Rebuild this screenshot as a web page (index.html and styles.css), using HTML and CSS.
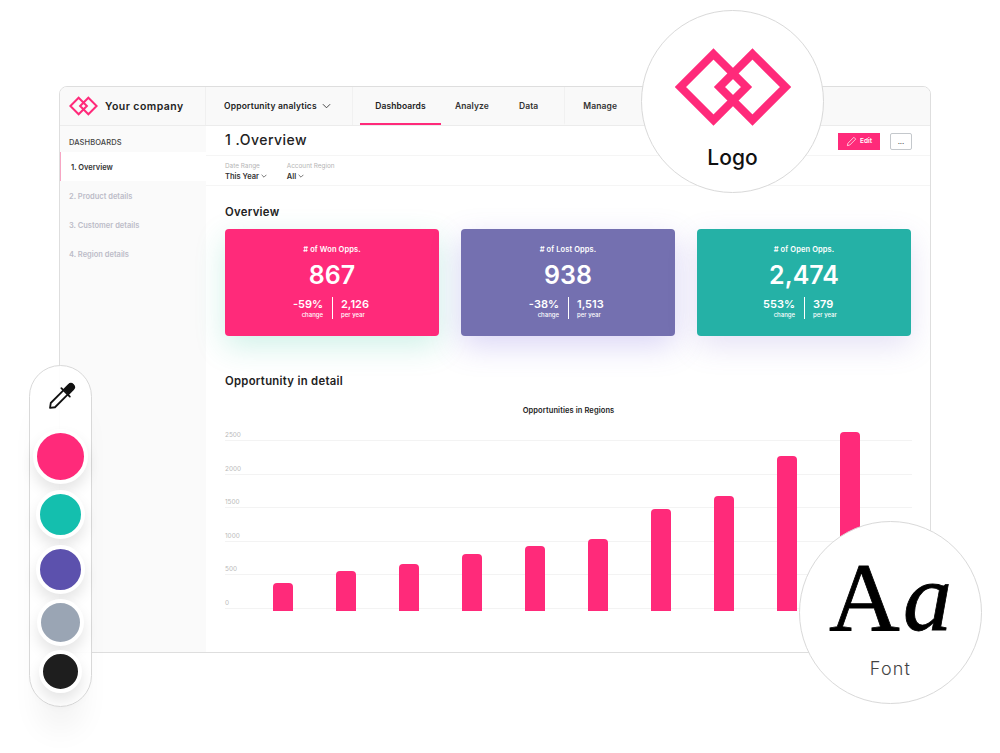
FILE: index.html
```html
<!DOCTYPE html>
<html lang="en">
<head>
  <meta charset="UTF-8">
  <meta name="viewport" content="width=device-width, initial-scale=1.0">
  <title>Your company</title>
  <link rel="stylesheet" href="styles.css">
</head>
<body>
  <svg class="defs" width="0" height="0">
    <symbol id="logoMark" viewBox="0 0 116 78">
      <path d="M38.5 6 L71.5 39 L38.5 72 L5.5 39 Z M77.5 6 L110.5 39 L77.5 72 L44.5 39 Z" fill="none" stroke="#ff2a7a" stroke-width="8"/>
    </symbol>
  </svg>

  <div class="stage">
    <div class="app">
      <header class="top-bar">
        <div class="brand">
          <svg class="brand-logo"><use href="#logoMark"/></svg>
          <span>Your company</span>
        </div>
        <div class="picker">
          <span>Opportunity analytics</span>
          <svg class="chevron-lg" viewBox="0 0 10 6"><path d="M1 1l4 4 4-4" fill="none" stroke="#333" stroke-width="1"/></svg>
        </div>
        <nav class="tabs">
          <a class="tab active">Dashboards</a>
          <a class="tab">Analyze</a>
          <a class="tab tab-data">Data</a>
          <a class="tab tab-manage">Manage</a>
        </nav>
      </header>

      <div class="app-body">
        <aside class="sidebar">
          <div class="side-title">DASHBOARDS</div>
          <div class="side-item current">1. Overview</div>
          <div class="side-item">2. Product details</div>
          <div class="side-item">3. Customer details</div>
          <div class="side-item">4. Region details</div>
        </aside>

        <main class="content">
          <div class="title-row">
            <h1>1 .Overview</h1>
            <div class="actions">
              <button class="edit-btn">
                <svg viewBox="0 0 12 12"><path d="M1.5 10.5l.6-2.6L8.6 1.4l2 2-6.5 6.5z" fill="none" stroke="#fff" stroke-width=".8"/></svg>
                Edit
              </button>
              <button class="more-btn">...</button>
            </div>
          </div>

          <div class="filters">
            <div class="filter">
              <label>Date Range</label>
              <span>This Year <svg viewBox="0 0 10 6"><path d="M1 1l4 4 4-4" fill="none" stroke="#333" stroke-width="1.1"/></svg></span>
            </div>
            <div class="filter">
              <label>Account Region</label>
              <span>All <svg viewBox="0 0 10 6"><path d="M1 1l4 4 4-4" fill="none" stroke="#333" stroke-width="1.1"/></svg></span>
            </div>
          </div>

          <div class="page">
            <h2 class="section-title">Overview</h2>
            <div class="cards">
              <div class="card pink">
                <div class="card-label"># of Won Opps.</div>
                <div class="card-value">867</div>
                <div class="card-stats">
                  <div class="stat left"><b>-59%</b><small>change</small></div>
                  <div class="stat"><b>2,126</b><small>per year</small></div>
                </div>
              </div>
              <div class="card purple">
                <div class="card-label"># of Lost Opps.</div>
                <div class="card-value">938</div>
                <div class="card-stats">
                  <div class="stat left"><b>-38%</b><small>change</small></div>
                  <div class="stat"><b>1,513</b><small>per year</small></div>
                </div>
              </div>
              <div class="card teal">
                <div class="card-label"># of Open Opps.</div>
                <div class="card-value">2,474</div>
                <div class="card-stats">
                  <div class="stat left"><b>553%</b><small>change</small></div>
                  <div class="stat"><b>379</b><small>per year</small></div>
                </div>
              </div>
            </div>

            <h2 class="section-title detail-title">Opportunity in detail</h2>
            <div class="chart-title">Opportunities in Regions</div>
            <div class="plot">
              <div class="grid-row first">2500</div>
              <div class="grid-row">2000</div>
              <div class="grid-row">1500</div>
              <div class="grid-row">1000</div>
              <div class="grid-row">500</div>
              <div class="grid-row">0</div>
              <div class="bars">
                <div class="bar" style="height: 28px"></div>
                <div class="bar" style="height: 40px"></div>
                <div class="bar" style="height: 47px"></div>
                <div class="bar" style="height: 57px"></div>
                <div class="bar" style="height: 65px"></div>
                <div class="bar" style="height: 72px"></div>
                <div class="bar" style="height: 102px"></div>
                <div class="bar" style="height: 115px"></div>
                <div class="bar" style="height: 155px"></div>
                <div class="bar" style="height: 179px"></div>
              </div>
            </div>
          </div>
        </main>
      </div>
    </div>

    <div class="bubble logo-bubble">
      <svg class="bubble-logo"><use href="#logoMark"/></svg>
      <div class="bubble-name">Logo</div>
    </div>

    <div class="bubble font-bubble">
      <div class="font-sample">A<i>a</i></div>
      <div class="font-name">Font</div>
    </div>

    <div class="palette">
      <svg class="dropper" viewBox="0 0 28 28">
        <g transform="rotate(45 14 14)" fill="none" stroke="#111" stroke-width="1.800" stroke-linejoin="round" stroke-linecap="round">
          <path d="M10.800 7V0a3.200 3.200 0 0 1 6.400 0v7" fill="#111"/>
          <path d="M8 7.500h12"/>
          <path d="M11 8v17.500l3 4 3-4V8"/>
        </g>
      </svg>
      <span class="swatch s-pink"></span>
      <span class="swatch s-teal"></span>
      <span class="swatch s-purple"></span>
      <span class="swatch s-grey"></span>
      <span class="swatch s-black"></span>
    </div>
  </div>
</body>
</html>
```
FILE: styles.css
```css
:root {
  --pink: #ff2a7a;
  --line: #f3f3f3;
  --text: #222;
}

* {
  box-sizing: border-box;
}

body {
  margin: 0;
  background: #fff;
  color: var(--text);
  font-family: "Inter", "Liberation Sans", sans-serif;
  overflow: hidden;
}

.defs {
  position: absolute;
}

.stage {
  position: relative;
  width: 1000px;
  height: 753px;
  padding: 86px 0 0 59px;
}

.app {
  width: 872px;
  height: 567px;
  border: 1px solid #dedede;
  border-radius: 8px;
  overflow: hidden;
  display: flex;
  flex-direction: column;
}

/* Top bar */
.top-bar {
  height: 39px;
  flex: none;
  display: flex;
  align-items: stretch;
  background: #f9f9f9;
  border-bottom: 1px solid #ececec;
  font-size: 8.500px;
  font-weight: 600;
  letter-spacing: .1px;
}

.brand {
  width: 146px;
  display: flex;
  align-items: center;
  gap: 7px;
  padding-left: 9px;
  font-size: 10.500px;
  letter-spacing: .45px;
  border-right: 1px solid #f0f0f0;
  color: #222;
}

.brand-logo {
  width: 29px;
  height: 20px;
}

.picker {
  width: 147px;
  display: flex;
  align-items: center;
  gap: 5px;
  padding-left: 18px;
  letter-spacing: .18px;
  border-right: 1px solid #f1f1f1;
}

.chevron-lg {
  width: 9px;
  height: 6px;
}

.tabs {
  display: flex;
  flex: 1;
  padding-left: 7px;
}

.tab {
  display: flex;
  align-items: center;
  justify-content: center;
  padding: 1px 14px 0;
  color: #333;
  border-bottom: 2px solid transparent;
}

.tab.active {
  width: 81px;
  padding: 1px 0 0;
  color: #222;
  border-bottom-color: var(--pink);
}

.tab-data {
  padding-left: 16px;
  padding-right: 26px;
  border-right: 1px solid #f1f1f1;
  margin-right: 4px;
}

/* Sidebar */
.app-body {
  flex: 1;
  display: flex;
  min-height: 0;
}

.sidebar {
  width: 146px;
  flex: none;
  background: #fafafa;
  padding-top: 11px;
  font-size: 7.500px;
  font-weight: 600;
}

.side-title {
  height: 15px;
  padding-left: 9px;
  line-height: 12px;
  color: #444;
  font-weight: 500;
  letter-spacing: .1px;
}

.side-item {
  height: 29px;
  padding: 1px 0 0 9px;
  display: flex;
  align-items: center;
  color: #bcbcc8;
}

.side-item.current {
  background: #fff;
  border-left: 1px solid #f7a6c4;
  padding-left: 10px;
  color: #333;
}

/* Main column */
.content {
  flex: 1;
  min-width: 0;
  background: #fff;
}

.title-row {
  height: 30px;
  display: flex;
  align-items: center;
  justify-content: space-between;
  padding: 0 18px 0 19px;
  border-bottom: 1px solid #f5f5f5;
}

h1 {
  margin: 0 0 3px;
  font-size: 14px;
  font-weight: 500;
  letter-spacing: .5px;
  color: #222;
}

.actions {
  display: flex;
  gap: 10px;
  margin-top: 1px;
}

.edit-btn {
  width: 42px;
  height: 17px;
  padding: 0;
  border: 0;
  display: flex;
  align-items: center;
  justify-content: center;
  gap: 3px;
  background: var(--pink);
  color: #fff;
  font: 600 6.500px "Inter", sans-serif;
}

.edit-btn svg {
  width: 11px;
  height: 11px;
}

.more-btn {
  width: 22px;
  height: 17px;
  padding: 0;
  border: 1px solid #c4c8cc;
  border-radius: 2px;
  background: #fff;
  color: #555;
  font: 600 7px "Inter", sans-serif;
}

.filters {
  height: 30px;
  display: flex;
  gap: 20px;
  padding: 7px 0 0 19px;
  border-bottom: 1px solid #f5f5f5;
}

.filter {
  display: flex;
  flex-direction: column;
  gap: 2px;
}

.filter label {
  font-size: 6.400px;
  line-height: 7px;
  color: #b5b5b5;
}

.filter span {
  font-size: 7.500px;
  line-height: 9px;
  font-weight: 600;
  color: #333;
}

.filter svg {
  width: 6px;
  height: 4px;
  vertical-align: 1px;
}

.page {
  padding: 20px 18px 0 19px;
}

.section-title {
  margin: 0;
  font-size: 11.300px;
  line-height: 13px;
  font-weight: 600;
  letter-spacing: .3px;
  color: #222;
}

/* Stat cards */
.cards {
  display: flex;
  gap: 22px;
  margin-top: 10px;
}

.card {
  width: 214px;
  height: 107px;
  border-radius: 4px;
  color: #fff;
  text-align: center;
  padding-top: 16px;
}

.card.pink {
  background: #ff2a7a;
  box-shadow: 0 10px 30px rgba(37, 190, 150, .22);
}

.card.purple {
  background: #7470b0;
  box-shadow: 0 10px 30px rgba(110, 90, 220, .25);
}

.card.teal {
  background: #25b1a6;
  box-shadow: 0 10px 30px rgba(110, 90, 200, .18);
}

.card-label {
  font-size: 7.500px;
  line-height: 10px;
  font-weight: 600;
  letter-spacing: .1px;
}

.card-value {
  margin-top: 6px;
  font-size: 25px;
  line-height: 28px;
  font-weight: 600;
}

.card-stats {
  display: flex;
  justify-content: center;
  margin-top: 8px;
  padding-left: 2px;
}

.stat {
  width: 50%;
  display: flex;
  flex-direction: column;
  align-items: flex-start;
  padding-left: 8px;
}

.stat.left {
  align-items: flex-end;
  padding: 0 9px 0 0;
  border-right: 1px solid #fff;
}

.stat b {
  font-size: 11px;
  line-height: 14px;
  font-weight: 600;
}

.stat small {
  font-size: 6px;
  line-height: 8px;
  font-weight: 500;
}

/* Chart */
.detail-title {
  margin-top: 39px;
}

.chart-title {
  margin-top: 18px;
  text-align: center;
  font-size: 7.500px;
  line-height: 10px;
  font-weight: 600;
  letter-spacing: .1px;
  color: #222;
}

.plot {
  position: relative;
  margin-top: 11px;
}

.grid-row {
  height: 33.600px;
  display: flex;
  align-items: flex-end;
  padding-bottom: 1px;
  border-bottom: 1px solid var(--line);
  font-size: 6.400px;
  line-height: 8px;
  color: #b9b9b9;
}

.grid-row.first {
  height: 14px;
}

.bars {
  position: absolute;
  left: 48px;
  bottom: -2px;
  display: flex;
  align-items: flex-end;
  gap: 43px;
}

.bar {
  width: 20px;
  background: var(--pink);
  border-radius: 4px 4px 0 0;
}

/* Floating circles */
.bubble {
  position: absolute;
  width: 183px;
  height: 183px;
  border: 1px solid #d9d9d9;
  border-radius: 50%;
  background: #fff;
  display: flex;
  flex-direction: column;
  align-items: center;
}

.logo-bubble {
  left: 641px;
  top: 10px;
  padding-top: 37px;
}

.bubble-logo {
  width: 116px;
  height: 78px;
}

.bubble-name {
  margin-top: 19px;
  font-size: 21px;
  line-height: 26px;
  font-weight: 500;
  color: #111;
}

.font-bubble {
  left: 799px;
  top: 521px;
  padding-top: 25px;
}

.font-sample {
  font-family: "Liberation Serif", serif;
  font-size: 98px;
  line-height: 100px;
  color: #000;
  -webkit-text-stroke: .8px #000;
}

.font-sample i {
  margin-left: 3px;
}

.font-name {
  margin-top: 12px;
  font-size: 18px;
  line-height: 20px;
  font-weight: 300;
  letter-spacing: 1.200px;
  color: #444;
}

/* Colour palette */
.palette {
  position: absolute;
  left: 29px;
  top: 365px;
  width: 63px;
  height: 342px;
  border: 1px solid #d9d9d9;
  border-radius: 32px;
  background: rgba(255, 255, 255, .92);
  box-shadow: 0 34px 30px -10px rgba(0, 0, 0, .05);
  display: flex;
  flex-direction: column;
  align-items: center;
  padding-top: 17px;
}

.dropper {
  width: 28px;
  height: 28px;
  margin-bottom: 18px;
  overflow: visible;
}

.swatch {
  display: block;
  border: 4px solid #fff;
  border-radius: 50%;
  box-shadow: 0 8px 14px rgba(0, 0, 0, .1);
}

.s-pink {
  width: 55px;
  height: 55px;
  background: #ff2a7a;
}

.s-teal {
  width: 49px;
  height: 49px;
  margin-top: 6px;
  background: #14bfae;
}

.s-purple {
  width: 49px;
  height: 49px;
  margin-top: 6px;
  background: #5c51ad;
}

.s-grey {
  width: 47px;
  height: 47px;
  margin-top: 5px;
  background: #9aa5b4;
}

.s-black {
  width: 43px;
  height: 43px;
  margin-top: 4px;
  background: #1e1e1e;
}
```
